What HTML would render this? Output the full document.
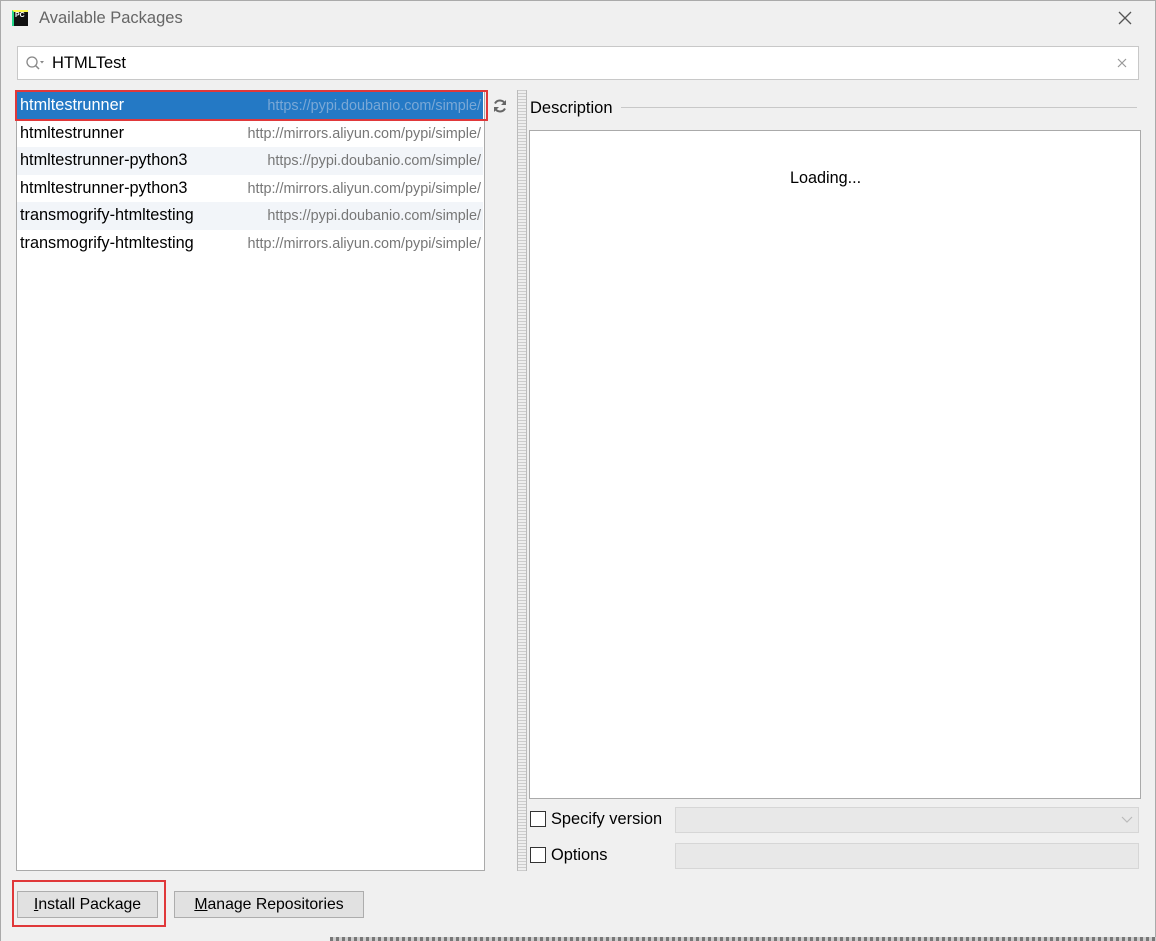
<!DOCTYPE html>
<html><head><meta charset="utf-8"><style>
*{margin:0;padding:0;box-sizing:border-box}
body{width:1156px;height:941px;background:#f0f0f0;font-family:"Liberation Sans",sans-serif;position:relative;overflow:hidden;color:#000}
.a{position:absolute}
.row{position:absolute;left:17px;width:466px;height:27.5px;font-size:16.3px;line-height:27px;padding-left:3px}
.row .u{position:absolute;right:2px;top:1px;font-size:14.4px;color:#777}
.cb{position:absolute;width:16px;height:16px;border:1px solid #333;background:#fff}
.btn{position:absolute;height:27px;background:#e1e1e1;border:1px solid #adadad;font-size:15.8px;line-height:25px;text-align:center}
</style></head><body>
<div class="a" style="left:0;top:0;width:1156px;height:941px;border:1px solid #aaa;border-bottom:none"></div>
<!-- title -->
<div class="a" style="left:12px;top:10px;width:16px;height:16px;background:#111;border-left:2px solid #21d789;border-top:2px solid #fcf84a"><span style="position:absolute;left:1px;top:0;font-size:7px;color:#fff;font-weight:bold">PC</span></div>
<div class="a" style="left:39px;top:9px;font-size:16.5px;color:#666">Available Packages</div>
<svg class="a" style="left:1118px;top:11px" width="14" height="14"><path d="M1 1L13 13M13 1L1 13" stroke="#555" stroke-width="1.3"/></svg>
<!-- search -->
<div class="a" style="left:17px;top:46px;width:1122px;height:34px;background:#fff;border:1px solid #c8c8c8"></div>
<svg class="a" style="left:25px;top:55px" width="20" height="16"><circle cx="7" cy="7" r="5" fill="none" stroke="#888" stroke-width="1.3"/><path d="M10.5 10.5L14 14" stroke="#888" stroke-width="1.5"/><path d="M15 6h4l-2 2.5z" fill="#888"/></svg>
<div class="a" style="left:52px;top:54px;font-size:16.5px">HTMLTest</div>
<svg class="a" style="left:1117px;top:58px" width="10" height="10"><path d="M1 1L9 9M9 1L1 9" stroke="#999" stroke-width="1.2"/></svg>
<!-- list -->
<div class="a" style="left:16px;top:90px;width:469px;height:781px;background:#fff;border:1px solid #aaa"></div>
<div class="row" style="top:92px;background:#2479c5;color:#fff">htmltestrunner<span class="u" style="color:#7aa8d6">https://pypi.doubanio.com/simple/</span></div>
<div class="row" style="top:119.5px">htmltestrunner<span class="u">http://mirrors.aliyun.com/pypi/simple/</span></div>
<div class="row" style="top:147px;background:#f2f5f9">htmltestrunner-python3<span class="u">https://pypi.doubanio.com/simple/</span></div>
<div class="row" style="top:174.5px">htmltestrunner-python3<span class="u">http://mirrors.aliyun.com/pypi/simple/</span></div>
<div class="row" style="top:202px;background:#f2f5f9">transmogrify-htmltesting<span class="u">https://pypi.doubanio.com/simple/</span></div>
<div class="row" style="top:229.5px">transmogrify-htmltesting<span class="u">http://mirrors.aliyun.com/pypi/simple/</span></div>
<div class="a" style="left:15px;top:90px;width:473px;height:31px;border:2px solid #e0383a"></div>
<svg class="a" style="left:492px;top:98px" width="16" height="16" viewBox="0 0 16 16"><path d="M13 6A5.5 5.5 0 0 0 3 5.5M3 10A5.5 5.5 0 0 0 13 10.5" fill="none" stroke="#666" stroke-width="2"/><path d="M14 2v5h-5z M2 14v-5h5z" fill="#666"/></svg>
<!-- splitter -->
<div class="a" style="left:517px;top:90px;width:10px;height:781px;background:repeating-linear-gradient(0deg,#ccc 0 1px,#eee 1px 3px);border-left:1px solid #bbb;border-right:1px solid #bbb"></div>
<!-- description -->
<div class="a" style="left:530px;top:99px;font-size:16.5px">Description</div>
<div class="a" style="left:621px;top:107px;width:516px;height:1px;background:#c8c8c8"></div>
<div class="a" style="left:529px;top:130px;width:612px;height:669px;background:#fff;border:1px solid #aaa"></div>
<div class="a" style="left:790px;top:169px;font-size:16.2px">Loading...</div>
<!-- options -->
<div class="cb" style="left:530px;top:811px"></div>
<div class="a" style="left:551px;top:810px;font-size:16.4px">Specify version</div>
<div class="a" style="left:675px;top:807px;width:464px;height:26px;background:#e8e8e8;border:1px solid #d6d6d6"></div>
<svg class="a" style="left:1121px;top:816px" width="12" height="8"><path d="M1 1L6 6L11 1" fill="none" stroke="#bbb" stroke-width="1.2"/></svg>
<div class="cb" style="left:530px;top:847px"></div>
<div class="a" style="left:551px;top:846px;font-size:16.4px">Options</div>
<div class="a" style="left:675px;top:843px;width:464px;height:26px;background:#e8e8e8;border:1px solid #d6d6d6"></div>
<!-- buttons -->
<div class="btn" style="left:17px;top:891px;width:141px"><u>I</u>nstall Package</div>
<div class="a" style="left:12px;top:880px;width:154px;height:47px;border:2px solid #e0383a"></div>
<div class="btn" style="left:174px;top:891px;width:190px"><u>M</u>anage Repositories</div>
<div class="a" style="left:330px;top:937px;width:826px;height:4px;background:repeating-linear-gradient(90deg,#777 0 3px,#ccc 3px 6px)"></div>
</body></html>
